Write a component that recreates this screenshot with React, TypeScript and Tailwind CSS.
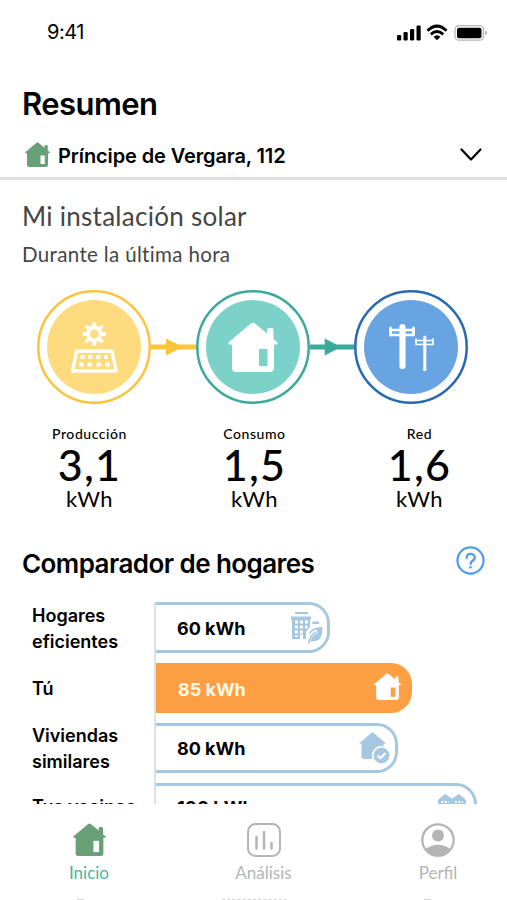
import React from "react";

const inter = "font-['Inter','Liberation_Sans',sans-serif]";
const lato = "font-['Lato','Noto_Sans',sans-serif]";

function House({ className, door }: { className: string; door: string }) {
  return (
    <svg viewBox="0 0 50 50" className={className}>
      <path d="M25 0 L39 11.5 V8 Q39 6 41 6 H43.5 Q45.500 6 45.500 8 V17 L49.500 20.500 Q50 22.500 48 22.500 H46 V46 Q46 50 42 50 H8 Q4 50 4 46 V22.500 H2 Q0 22.500 .5 20.500 L22.500 1.800 Q25 -.5 27 1.800Z" fill="currentColor" />
      <rect x="31" y="27" width="8.500" height="17" fill={door} />
    </svg>
  );
}

function Solar() {
  return (
    <svg viewBox="0 0 48 54" className="h-[54px] w-12" fill="none" stroke="#fff">
      <g strokeWidth="3.800">
        {[0, 45, 90, 135, 180, 225, 270, 315].map((a) => (
          <path key={a} d="M24.300 2.300 V8" transform={`rotate(${a} 24.300 14)`} />
        ))}
        <circle cx="24.300" cy="14" r="6.300" strokeWidth="3.800" />
      </g>
      <path d="M6.500 31.300 H42 L46 51 H2.500Z" strokeWidth="3.400" strokeLinejoin="round" />
      <g fill="#fff" stroke="none">
        {[10.500, 18.300, 26.200, 34].map((x) => (
          <rect key={x} x={x} y="35" width="4" height="4" rx=".6" />
        ))}
        {[9, 17.700, 26.500, 35.400].map((x) => (
          <rect key={x} x={x} y="42.500" width="4.200" height="4.200" rx=".6" />
        ))}
      </g>
    </svg>
  );
}

function Poles() {
  return (
    <svg viewBox="0 0 46 48" className="h-12 w-[46px]" fill="none" stroke="#fff" strokeLinecap="round">
      <path d="M14.500 4 V43" strokeWidth="6.200" />
      <path d="M2 7 H26 M2 12 H26" strokeWidth="2.400" strokeLinecap="butt" />
      <path d="M2.500 5 V12 M25.500 5 V12" strokeWidth="2.800" />
      <path d="M36.800 14 V47" strokeWidth="3" />
      <path d="M28 17.500 H45 M28 21.500 H45 M28 16 V21.500 M45 16 V21.500" strokeWidth="1.700" />
    </svg>
  );
}

function Building() {
  return (
    <svg viewBox="0 0 32 32" className="h-8 w-8 text-[#a5c7df]" fill="currentColor">
      <path d="M4 0H17V2H4Z M0 4.500H20V7.500H19V15L15 20V27H1V7.500H0Z" />
      <path d="M4 8.500h3v3h-3z M9 8.500h3v3h-3z M14 8.500h3v3h-3z M4 13.500h3v3h-3z M9 13.500h3v3h-3z M14 13.500h2.500v3h-2.500z M4 18.500h3v3h-3z M9 18.500h3v3h-3z M4 23.500h3v1.500h-3z M9 22.500h3v4.500h-3z" fill="white" />
      <path d="M21.800 9.500H28V12H21Z" />
      <path d="M31.500 15 C22 15 15.500 19 18.500 29 C28 31 32 25 31.500 15Z" />
      <path d="M16.500 31.500 C17.500 26 20 22 26 19" fill="none" stroke="white" strokeWidth="4" />
      <path d="M17.500 31.500 C18.500 26 21 22 25.500 20" fill="none" stroke="currentColor" strokeWidth="1.800" />
    </svg>
  );
}

function CheckedHouse() {
  return (
    <svg viewBox="0 0 31 32" className="h-8 w-[31px] text-[#a5c7df]">
      <path d="M13.500 0 L27 11.500 H24.500 V27 H5 Q2.500 27 2.500 25 V11.500 H0Z" fill="currentColor" />
      <circle cx="22.500" cy="23.500" r="8.800" fill="currentColor" stroke="white" strokeWidth="1.800" />
      <path d="M18.500 23.500 L21.500 26.300 L26.500 21" fill="none" stroke="white" strokeWidth="2.200" />
    </svg>
  );
}

function Neighbours() {
  return (
    <svg viewBox="0 0 28 28" className="h-7 w-7 text-[#a5c7df]">
      <path d="M0 6 L7 0 L14 4.500 L21 0 L28 6 V24 H0Z" fill="currentColor" />
      <path d="M3.500 8H11 M17 8H25 M3.500 14H11 M17 14H25" stroke="white" strokeWidth="1.800" strokeDasharray="2 1.500" />
    </svg>
  );
}

function Node({ ring, fill, children }: { ring: string; fill: string; children: React.ReactNode }) {
  return (
    <div className="grid size-[114px] shrink-0 place-items-center">
      <svg viewBox="0 0 114 114" className="col-start-1 row-start-1 size-[114px]">
        <circle cx="57" cy="57" r="55.700" fill="white" stroke={ring} strokeWidth="2.500" />
        <circle cx="57" cy="57" r="47" fill={fill} />
      </svg>
      <div className="z-10 col-start-1 row-start-1">{children}</div>
    </div>
  );
}

function Arrow({ color, size }: { color: string; size: string }) {
  return (
    <svg viewBox="0 0 45 18" preserveAspectRatio="none" className={`h-[18px] shrink-0 ${size}`} fill={color}>
      <path d="M0 6.500H15V.5L27 6.500H45V11.500H27L15 17.500V11.500H0Z" />
    </svg>
  );
}

function Reading({ label, value }: { label: string; value: string }) {
  return (
    <div className="flex w-[165px] shrink-0 flex-col items-center">
      <span className="text-[14px] leading-[18px] font-medium tracking-[0.550px]">{label}</span>
      <span className="text-[43px] leading-[43px] font-medium tracking-[1.200px]">{value}</span>
      <span className="text-[22px] leading-[26px] tracking-[0.500px]">kWh</span>
    </div>
  );
}

function Label({ children, size = "h-[50px]" }: { children: React.ReactNode; size?: string }) {
  return (
    <div className={`flex shrink-0 items-center text-[18px] leading-[26px] font-semibold whitespace-nowrap ${size}`}>
      <span>{children}</span>
    </div>
  );
}

function Bar({ value, bar, icon, shift = "mt-px" }: { value: string; bar: string; icon: React.ReactNode; shift?: string }) {
  return (
    <div className={`flex shrink-0 items-center justify-between rounded-r-[21px] text-[18px] font-bold ${bar}`}>
      <span className={shift}>{value}</span>
      {icon}
    </div>
  );
}

export default function App() {
  return (
    <div className={`flex h-[900px] w-[507px] flex-col overflow-hidden bg-white text-black ${inter}`}>
      <header className="h-[180px] shrink-0 border-b-[3px] border-[#dedede]">
        <div className="flex h-[64px] items-center justify-between pr-5 pl-[47px]">
          <span className="text-[20px] tracking-[-0.500px]">9:41</span>
          <svg viewBox="0 0 91 18" className="mt-[2px] h-[18px] w-[91px]">
            <g transform="translate(1 0)">
              <rect x="0" y="11" width="4.200" height="5.500" rx="1.300" />
              <rect x="6.500" y="8" width="4.200" height="8.500" rx="1.300" />
              <rect x="13" y="5" width="4.200" height="11.500" rx="1.300" />
              <rect x="19.500" y="1.500" width="4.200" height="15" rx="1.300" />
            </g>
            <g fill="none" stroke="black" strokeWidth="2.900">
              <path d="M31.500 6.800 Q41 -2.500 50.500 6.800" />
              <path d="M34.800 10.400 Q41 4.600 47.200 10.400" />
            </g>
            <path d="M37.500 12.800 Q41 9.800 44.500 12.800 L41 16.300Z" />
            <rect x="59" y="1.700" width="28.500" height="14.500" rx="4" fill="none" stroke="#b5b5b5" strokeWidth="1.300" />
            <rect x="61" y="3.700" width="24.500" height="10.500" rx="2" />
            <path d="M89 7 Q91 7.200 91 9 Q91 10.800 89 11Z" fill="#b5b5b5" />
          </svg>
        </div>
        <h1 className="mt-[20px] pl-[22px] text-[31px] leading-10 font-semibold tracking-[-0.550px]">Resumen</h1>
        <div className="mt-[14px] flex h-[33px] items-center pr-[25px] pl-[25px]">
          <House className="h-[25px] w-[25px] text-[#6aa078]" door="white" />
          <span className="mt-[3px] ml-2 flex-1 text-[20px] font-semibold tracking-[-0.120px]">Príncipe de Vergara, 112</span>
          <svg viewBox="0 0 22 14" className="mt-px h-[14px] w-[22px]" fill="none" stroke="black" strokeWidth="2.200" strokeLinecap="round" strokeLinejoin="round">
            <path d="M1.500 1.500 L11 11.500 L20.500 1.500" />
          </svg>
        </div>
      </header>

      <section className={`h-[357px] shrink-0 ${lato}`}>
        <h2 className="pt-5 pl-[22px] text-[26px] leading-[32px] tracking-[0.280px] text-[#454545]">Mi instalación solar</h2>
        <p className="mt-2 pl-[22px] text-[20.500px] leading-[28px] tracking-[0.350px] text-[#454545]">Durante la última hora</p>
        <div className="mt-[22px] flex items-center pl-[37px]">
          <Node ring="#fbc43d" fill="#ffdb80"><Solar /></Node>
          <Arrow color="#fbc43d" size="w-[45px]" />
          <Node ring="#3ba99c" fill="#7cd2c9"><House className="h-[50px] w-[50px] text-white" door="#7cd2c9" /></Node>
          <Arrow color="#3ba99c" size="w-[44px]" />
          <Node ring="#2769b3" fill="#68a4e2"><Poles /></Node>
        </div>
        <div className="mt-[21px] flex pl-[7px]">
          <Reading label="Producción" value="3,1" />
          <Reading label="Consumo" value="1,5" />
          <Reading label="Red" value="1,6" />
        </div>
      </section>

      <section className="flex h-[267px] shrink-0 flex-col overflow-hidden">
        <div className="flex h-[53px] shrink-0 items-center justify-between pr-[22px] pl-[22px]">
          <h2 className="text-[26px] font-semibold tracking-[-0.570px]">Comparador de hogares</h2>
          <svg viewBox="0 0 30 30" className="mb-[6px] size-[29px]" fill="none" stroke="#4d9cf3" strokeWidth="2.300">
            <circle cx="15" cy="15" r="13.500" />
            <path d="M11 12.500 C11 6.500 19.500 7 19.500 12 C19.500 15.500 15 15 15 18.500" strokeLinecap="round" />
            <circle cx="15" cy="22" r="1" fill="#4d9cf3" strokeWidth=".8" />
          </svg>
        </div>
        <div className="mt-3 ml-8 flex">
          <div className="flex w-[122px] shrink-0 flex-col gap-[10px] pt-[2px]">
            <Label>Hogares<br />eficientes</Label>
            <Label>Tú</Label>
            <Label>Viviendas<br />similares</Label>
            <Label size="h-[46px]">Tus vecinos</Label>
          </div>
          <div className="flex flex-col gap-[10px] border-l-2 border-[#dce1e4]">
            <Bar value="60 kWh" shift="mt-[2px]" bar="h-[51px] w-[174px] border-[3px] border-l-0 border-[#a5c7df] pr-[4px] pl-[21px]" icon={<Building />} />
            <Bar value="85 kWh" shift="mt-[2px]" bar="h-[50px] w-[256px] bg-[#ff9f43] pr-[11px] pl-[22px] text-[#fffae8]" icon={<House className="mb-1 h-[27px] w-[27px] text-white" door="#ff9f43" />} />
            <Bar value="80 kWh" shift="" bar="h-[50px] w-[242px] border-[3px] border-l-0 border-[#a5c7df] pr-[5px] pl-[21px]" icon={<CheckedHouse />} />
            <Bar value="100 kWh" shift="mb-[2px]" bar="h-[50px] w-[321px] border-[3px] border-l-0 border-[#a5c7df] pr-[8px] pl-[21px]" icon={<Neighbours />} />
          </div>
        </div>
      </section>

      <nav className={`flex h-[94px] shrink-0 bg-white pt-[19px] pl-[2px] text-[17px] text-[#b5b5b5] ${lato}`}>
        <div className="flex w-[174px] shrink-0 flex-col items-center text-[#45b89c]">
          <House className="size-[33px] text-[#6aa078]" door="white" />
          <span className="mt-1">Inicio</span>
        </div>
        <div className="flex w-[175px] shrink-0 flex-col items-center">
          <svg viewBox="0 0 34 34" className="size-[34px]" fill="none" stroke="currentColor" strokeWidth="2">
            <rect x="1" y="1" width="32" height="32" rx="7.500" />
            <path d="M9.500 14V25.500 M17 9V25.500 M24.500 20V25.500" strokeWidth="2.500" strokeLinecap="round" />
          </svg>
          <span className="mt-[3px]">Análisis</span>
        </div>
        <div className="flex w-[174px] shrink-0 flex-col items-center">
          <svg viewBox="0 0 34 34" className="size-[34px]" fill="none" stroke="currentColor" strokeWidth="2.300">
            <circle cx="17" cy="17" r="15.700" />
            <circle cx="17" cy="12.500" r="6" fill="currentColor" stroke="none" />
            <path d="M4.500 26 Q17 17.500 29.500 26 Q17 41 4.500 26Z" fill="currentColor" stroke="none" />
          </svg>
          <span className="mt-[3px]">Perfil</span>
        </div>
      </nav>
      <div className="flex h-[2px] shrink-0 items-end pl-[77px]">
        <div className="h-px w-[7px] bg-[#d5d5d5]" />
        <div className="ml-[138px] w-[65px] border-t border-dashed border-[#d5d5d5]" />
        <div className="ml-[137px] h-px w-[7px] bg-[#d5d5d5]" />
      </div>
    </div>
  );
}
